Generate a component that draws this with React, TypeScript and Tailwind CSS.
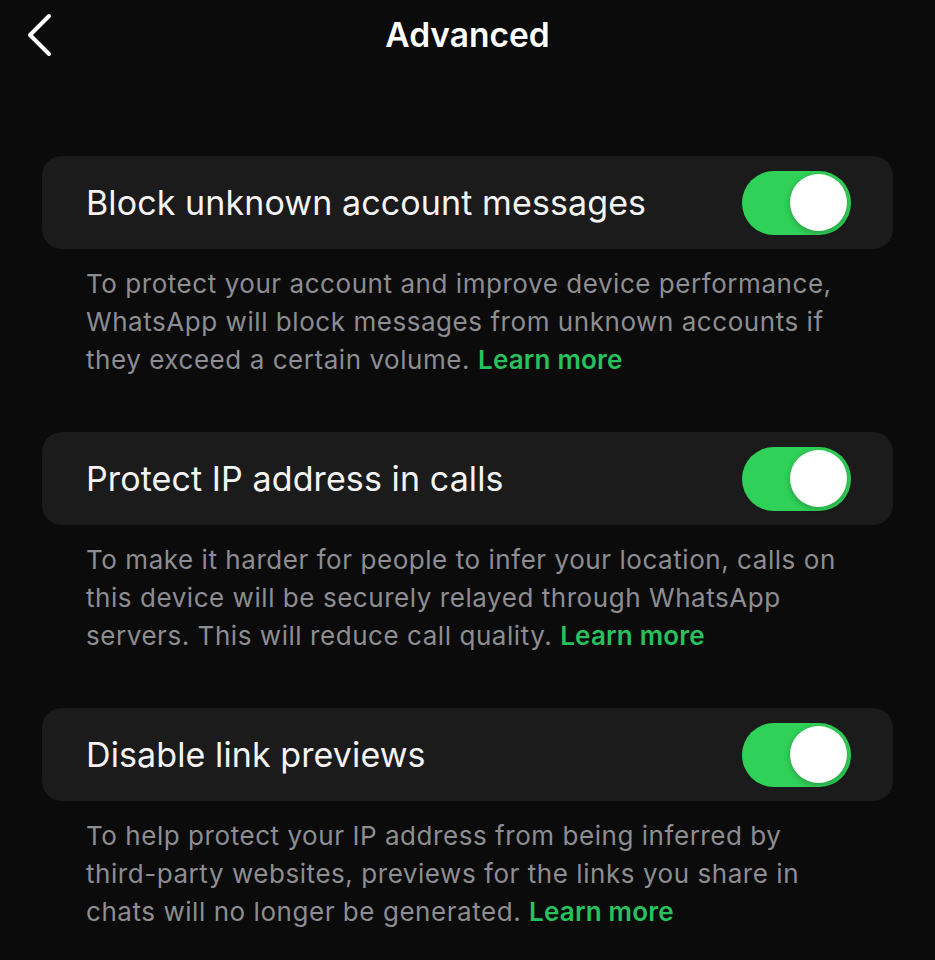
const items = [
  {
    title: "Block unknown account messages",
    desc: "To protect your account and improve device performance, WhatsApp will block messages from unknown accounts if they exceed a certain volume.",
  },
  {
    title: "Protect IP address in calls",
    desc: "To make it harder for people to infer your location, calls on this device will be securely relayed through WhatsApp servers. This will reduce call quality.",
  },
  {
    title: "Disable link previews",
    desc: "To help protect your IP address from being inferred by third-party websites, previews for the links you share in chats will no longer be generated.",
  },
];

function Toggle() {
  return (
    <div className="w-[109px] h-[64px] rounded-full bg-[#30d158] flex items-center justify-end pr-[4px]">
      <div className="w-[57px] h-[57px] rounded-full bg-white shadow-[0_2px_6px_rgba(0,0,0,0.25)]" />
    </div>
  );
}

export default function App() {
  return (
    <div className="w-[935px] h-[960px] bg-[#0b0b0b] text-white overflow-hidden font-['Inter',sans-serif]">
      {/* header */}
      <div className="relative h-[72px] flex items-center justify-center">
        <svg className="absolute left-[24px] top-[12px]" width="34" height="46" viewBox="0 0 34 46">
          <polyline points="25,4 6,23 25,42" fill="none" stroke="white" strokeWidth="4" strokeLinecap="round" strokeLinejoin="round" />
        </svg>
        <h1 className="text-[33.5px] font-semibold -mt-[2px]">Advanced</h1>
      </div>

      <div className="px-[42px] pt-[84px] flex flex-col gap-[53px]">
        {items.map((it) => (
          <div key={it.title}>
            <div className="h-[93px] rounded-[20px] bg-[#1b1b1c] flex items-center justify-between pl-[44px] pr-[42px]">
              <span className="text-[34px] text-[#f4f4f4] tracking-[0.1px]">{it.title}</span>
              <Toggle />
            </div>
            <p className="pl-[44px] pr-[40px] pt-[16px] text-[26px] leading-[38px] tracking-[0.55px] text-[#8d8d92]">
              {it.desc} <span className="text-[#27c15e] font-semibold tracking-[0.2px]">Learn more</span>
            </p>
          </div>
        ))}
      </div>
    </div>
  );
}
